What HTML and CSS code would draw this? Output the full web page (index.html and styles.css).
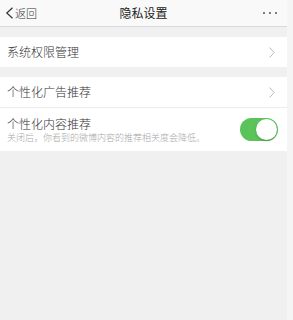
FILE: index.html
```html
<!DOCTYPE html>
<html lang="zh">
<head>
<meta charset="utf-8">
<link rel="stylesheet" href="styles.css">
</head>
<body>
<div class="page">
  <header class="nav">
    <div class="back">
      <svg class="back-icon" width="9" height="12" viewBox="0 0 9 12"><path d="M7.5 0.8 L1.8 6 L7.5 11.2" fill="none" stroke="#333" stroke-width="1.2"/></svg>
      <span>返回</span>
    </div>
    <div class="title">隐私设置</div>
    <div class="more"><i></i><i></i><i></i></div>
  </header>

  <section class="group">
    <div class="row">
      <span class="label">系统权限管理</span>
      <svg class="chev" width="6" height="11" viewBox="0 0 6 11"><path d="M0.6 0.6 L5.2 5.5 L0.6 10.4" fill="none" stroke="#b8b8b8" stroke-width="1"/></svg>
    </div>
  </section>

  <section class="group">
    <div class="row">
      <span class="label">个性化广告推荐</span>
      <svg class="chev" width="6" height="11" viewBox="0 0 6 11"><path d="M0.6 0.6 L5.2 5.5 L0.6 10.4" fill="none" stroke="#b8b8b8" stroke-width="1"/></svg>
    </div>
    <div class="row tall">
      <div class="texts">
        <span class="label">个性化内容推荐</span>
        <span class="sub">关闭后，你看到的微博内容的推荐相关度会降低。</span>
      </div>
      <div class="toggle"><div class="knob"></div></div>
    </div>
  </section>
</div>
</body>
</html>
```

FILE: styles.css
```css
html, body {
  margin: 0;
  padding: 0;
}
body {
  width: 293px;
  height: 320px;
  background: #f5f5f5;
  font-family: "Noto Sans CJK SC", "Noto Sans", sans-serif;
  font-weight: 300;
  color: #333;
  overflow: hidden;
}
.page {
  width: 287px;
  height: 320px;
  background: #f0f0f0;
}
.nav {
  height: 26px;
  background: #f9f9f9;
  border-bottom: 1px solid #dadada;
  display: flex;
  align-items: center;
  position: relative;
}
.back {
  display: flex;
  align-items: center;
  padding-left: 5px;
  font-size: 11px;
  color: #333;
  gap: 1px;
}
.back span {
  line-height: 12px;
}
.title {
  position: absolute;
  left: 0;
  right: 0;
  text-align: center;
  font-size: 12px;
  font-weight: 400;
  color: #222;
  line-height: 26px;
  pointer-events: none;
}
.more {
  margin-left: auto;
  margin-right: 10px;
  display: flex;
  gap: 4px;
}
.more i {
  display: block;
  width: 2px;
  height: 2px;
  border-radius: 50%;
  background: #555;
}
.group {
  background: #fff;
  margin-top: 10px;
}
.row {
  display: flex;
  align-items: center;
  justify-content: space-between;
  height: 30px;
  padding: 0 12px 0 7px;
}
.row + .row {
  border-top: 1px solid #ececec;
}
.row.tall {
  height: 43px;
  padding-right: 9px;
}
.label {
  font-size: 12px;
  color: #333;
  line-height: 14px;
}
.texts {
  display: flex;
  flex-direction: column;
  gap: 1px;
}
.sub {
  font-size: 9px;
  color: #a8a8a8;
  line-height: 11px;
}
.toggle {
  width: 38px;
  height: 23px;
  border-radius: 12px;
  background: #5ac35a;
  display: flex;
  align-items: center;
  justify-content: flex-end;
  padding: 0 1px;
  box-sizing: border-box;
}
.knob {
  width: 21px;
  height: 21px;
  border-radius: 50%;
  background: #fff;
  box-shadow: 0 1px 2px rgba(0,0,0,0.25);
}
```
